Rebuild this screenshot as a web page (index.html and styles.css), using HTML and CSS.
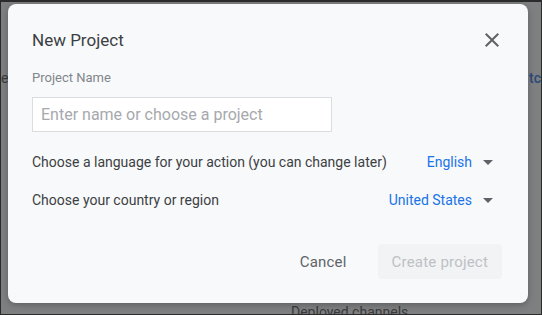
FILE: index.html
```html
<!DOCTYPE html>
<html lang="en">
<head>
  <meta charset="UTF-8">
  <title>New Project</title>
  <link rel="stylesheet" href="styles.css">
</head>
<body>

  <div class="backdrop">
    <span class="behind behind-left">e</span>
    <span class="behind behind-right">tc</span>
    <span class="behind behind-bottom">Deployed channels</span>
  </div>

  <div class="dialog">
    <div class="dialog-header">
      <h2 class="dialog-title">New Project</h2>
      <button class="close-btn" aria-label="Close">
        <svg width="24" height="24" viewBox="0 0 24 24">
          <path d="M19 6.41L17.59 5 12 10.59 6.41 5 5 6.41 10.59 12 5 17.59 6.41 19 12 13.41 17.59 19 19 17.59 13.41 12z" fill="#5f6368"/>
        </svg>
      </button>
    </div>

    <label class="field-label">Project Name</label>
    <input type="text" class="name-input" placeholder="Enter name or choose a project">

    <div class="option-row first">
      <span class="option-text">Choose a language for your action (you can change later)</span>
      <span class="option-select">English <i class="arrow"></i></span>
    </div>

    <div class="option-row">
      <span class="option-text">Choose your country or region</span>
      <span class="option-select">United States <i class="arrow"></i></span>
    </div>

    <div class="dialog-footer">
      <button class="btn btn-cancel">Cancel</button>
      <button class="btn btn-create" disabled>Create project</button>
    </div>
  </div>

</body>
</html>
```

FILE: styles.css
```css
* {
  box-sizing: border-box;
}

body {
  margin: 0;
  width: 542px;
  height: 315px;
  background: #7e7f80;
  border: 1px solid #2b2b2b;
  border-top-width: 2px;
  font-family: Roboto, Arial, sans-serif;
  overflow: hidden;
  position: relative;
}

.backdrop {
  position: absolute;
  inset: 0;
}

.behind {
  position: absolute;
  font-size: 14px;
  color: #3a3b3d;
}

.behind-left {
  left: 0;
  top: 68px;
}

.behind-right {
  left: 528px;
  top: 68px;
  color: #2d4a7a;
  font-weight: 500;
}

.behind-bottom {
  left: 290px;
  top: 302px;
}

.dialog {
  position: absolute;
  left: 7px;
  top: 2px;
  width: 520px;
  height: 299px;
  background: #f8f9fa;
  border-radius: 8px;
  box-shadow: 0 2px 6px rgba(0, 0, 0, 0.25);
  padding: 24px 24px 24px 24px;
  display: flex;
  flex-direction: column;
}

.dialog-header {
  display: flex;
  justify-content: space-between;
  align-items: center;
  height: 24px;
}

.dialog-title {
  margin: 0;
  font-size: 17px;
  font-weight: 400;
  color: #3c4043;
  line-height: 24px;
}

.close-btn {
  border: none;
  background: none;
  padding: 0;
  width: 24px;
  height: 24px;
  cursor: pointer;
}

.field-label {
  display: block;
  margin-top: 18px;
  font-size: 13px;
  line-height: 16px;
  color: #80868b;
}

.name-input {
  margin-top: 11px;
  width: 300px;
  height: 35px;
  border: 1px solid #dadce0;
  background: #fff;
  padding: 0 8px;
  font-family: Roboto, Arial, sans-serif;
  font-size: 16px;
  color: #3c4043;
}

.name-input::placeholder {
  color: #a6a9ad;
}

.option-row {
  display: flex;
  justify-content: space-between;
  align-items: center;
  height: 24px;
  margin-top: 14px;
  padding-right: 11px;
  font-size: 14px;
}

.option-row.first {
  margin-top: 18px;
}

.option-text {
  color: #3c4043;
}

.option-select {
  display: flex;
  align-items: center;
  color: #1a73e8;
}

.arrow {
  margin-left: 11px;
  width: 0;
  height: 0;
  border-left: 5px solid transparent;
  border-right: 5px solid transparent;
  border-top: 5px solid #5f6368;
}

.dialog-footer {
  margin-top: auto;
  display: flex;
  justify-content: flex-end;
  gap: 15px;
  padding-right: 2px;
}

.btn {
  height: 35px;
  border: none;
  border-radius: 4px;
  padding: 0 16px;
  font-family: Roboto, Arial, sans-serif;
  font-size: 15px;
  letter-spacing: 0.2px;
  background: none;
  cursor: pointer;
}

.btn-cancel {
  color: #5f6368;
}

.btn-create {
  background: #f2f3f4;
  color: #bdc1c6;
  padding: 0 14px;
}
```
